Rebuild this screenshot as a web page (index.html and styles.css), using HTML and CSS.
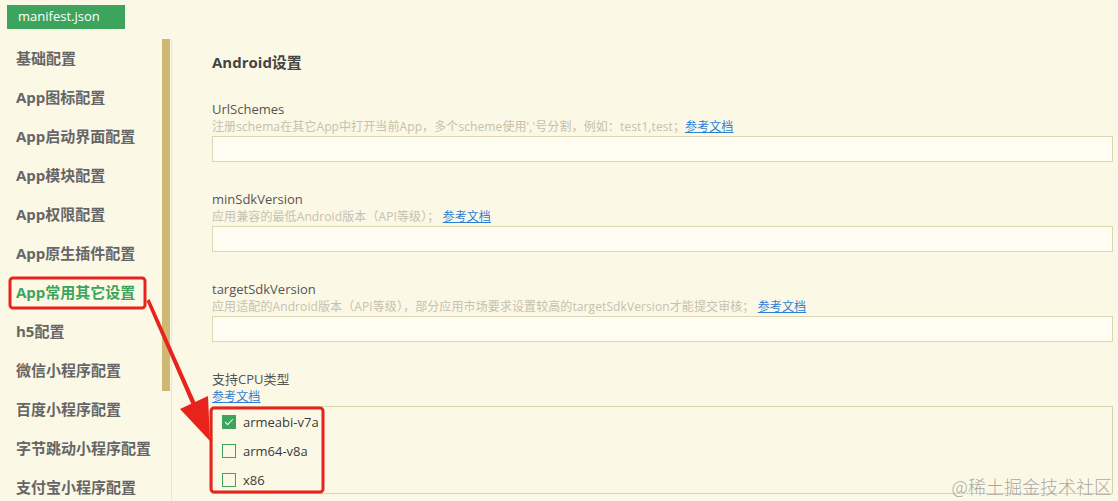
FILE: index.html
```html
<!DOCTYPE html>
<html lang="zh-CN">
<head>
    <meta charset="UTF-8">
    <title>manifest.json</title>
    <link rel="stylesheet" href="styles.css">
</head>
<body>
    <div class="tabs">
        <div class="tab">manifest.json</div>
    </div>

    <div class="main">
        <div class="sidebar">
            <ul class="menu">
                <li>基础配置</li>
                <li>App图标配置</li>
                <li>App启动界面配置</li>
                <li>App模块配置</li>
                <li>App权限配置</li>
                <li>App原生插件配置</li>
                <li class="active">App常用其它设置</li>
                <li>h5配置</li>
                <li>微信小程序配置</li>
                <li>百度小程序配置</li>
                <li>字节跳动小程序配置</li>
                <li>支付宝小程序配置</li>
            </ul>
            <div class="scroll-track"><div class="scroll-thumb"></div></div>
        </div>

        <div class="content">
            <h2>Android设置</h2>

            <div class="field">
                <div class="label">UrlSchemes</div>
                <div class="hint">注册schema在其它App中打开当前App，多个scheme使用','号分割，例如：test1,test；<a href="#">参考文档</a></div>
                <input type="text">
            </div>

            <div class="field">
                <div class="label">minSdkVersion</div>
                <div class="hint">应用兼容的最低Android版本（API等级）； <a href="#">参考文档</a></div>
                <input type="text">
            </div>

            <div class="field">
                <div class="label">targetSdkVersion</div>
                <div class="hint">应用适配的Android版本（API等级），部分应用市场要求设置较高的targetSdkVersion才能提交审核； <a href="#">参考文档</a></div>
                <input type="text">
            </div>

            <div class="field">
                <div class="label">支持CPU类型</div>
                <div class="hint"><a href="#">参考文档</a></div>
                <div class="cpu-box">
                    <label class="check"><span class="box checked"></span>armeabi-v7a</label>
                    <label class="check"><span class="box"></span>arm64-v8a</label>
                    <label class="check"><span class="box"></span>x86</label>
                </div>
            </div>
        </div>
    </div>

    <!-- red annotation drawn over the screenshot -->
    <svg class="marks" width="1118" height="501" viewBox="0 0 1118 501">
        <rect x="10" y="278" width="135" height="30" rx="3" fill="none" stroke="#e8231c" stroke-width="3"/>
        <rect x="211" y="408" width="112" height="84" rx="3" fill="none" stroke="#e8231c" stroke-width="3"/>
        <polygon points="146.5,301 149.5,299 198,408 194,410" fill="#e8231c"/>
        <polygon points="210,441 180,409 208,396" fill="#e8231c"/>
    </svg>

    <div class="watermark">@稀土掘金技术社区</div>
</body>
</html>
```

FILE: styles.css
```css
body {
    margin: 0;
    background: #fcf8e6;
    font-family: "Open Sans", "Noto Sans CJK SC", sans-serif;
    color: #555;
    width: 1118px;
    height: 501px;
    overflow: hidden;
    position: relative;
}
.tabs {
    height: 39px;
    padding: 4px 0 0 7px;
    box-sizing: border-box;
}
.tab {
    display: inline-block;
    width: 118px;
    height: 24px;
    line-height: 23px;
    background: #3ca45c;
    color: #fff;
    font-size: 13px;
    padding-left: 11px;
    box-sizing: border-box;
}
.main {
    display: flex;
}
.sidebar {
    display: flex;
    width: 171px;
    flex-shrink: 0;
    border-right: 1px solid #ece5c9;
    height: 462px;
}
.menu {
    list-style: none;
    margin: 0;
    padding: 0;
    width: 162px;
}
.menu li {
    height: 39px;
    line-height: 39px;
    padding-left: 16px;
    font-size: 15px;
    font-weight: bold;
    color: #666;
    white-space: nowrap;
}
.menu li.active {
    color: #3ca45c;
}
.scroll-track {
    width: 8px;
}
.scroll-thumb {
    height: 352px;
    background: #cfb873;
}
.content {
    flex: 1;
    padding: 13px 5px 0 40px;
}
h2 {
    margin: 0 0 28px;
    font-size: 15px;
    line-height: 20px;
    color: #444;
}
.field {
    margin-bottom: 28px;
}
.label {
    font-size: 13px;
    line-height: 18px;
    color: #555;
}
.hint {
    font-size: 12px;
    line-height: 18px;
    color: #c6c1ac;
    white-space: nowrap;
    letter-spacing: 0.1px;
}
.hint a {
    color: #2c7fd6;
    text-decoration: underline;
}
input {
    display: block;
    width: 100%;
    height: 26px;
    box-sizing: border-box;
    border: 1px solid #ddd6b3;
    background: #fffdf2;
    margin: 0;
}
.cpu-box {
    border: 1px solid #ddd6b3;
    border-right-color: #d6d0b4;
    height: 88px;
    box-sizing: border-box;
    padding: 0 0 0 9px;
}
.check {
    display: flex;
    align-items: center;
    height: 29px;
    font-size: 13px;
    color: #3a3a3a;
}
.box {
    width: 14px;
    height: 14px;
    box-sizing: border-box;
    border: 1px solid #3ca45c;
    margin-right: 7px;
    position: relative;
}
.box.checked {
    background: #3ca45c;
}
.box.checked::after {
    content: "";
    position: absolute;
    left: 4px;
    top: 1px;
    width: 3px;
    height: 7px;
    border: solid #fff;
    border-width: 0 1.5px 1.5px 0;
    transform: rotate(45deg);
}
.marks {
    position: absolute;
    left: 0;
    top: 0;
    pointer-events: none;
}
.watermark {
    position: absolute;
    right: 6px;
    bottom: 2px;
    font-family: "Noto Sans CJK SC", sans-serif;
    font-size: 18px;
    font-weight: 300;
    color: rgba(130, 130, 130, 0.7);
}
```
